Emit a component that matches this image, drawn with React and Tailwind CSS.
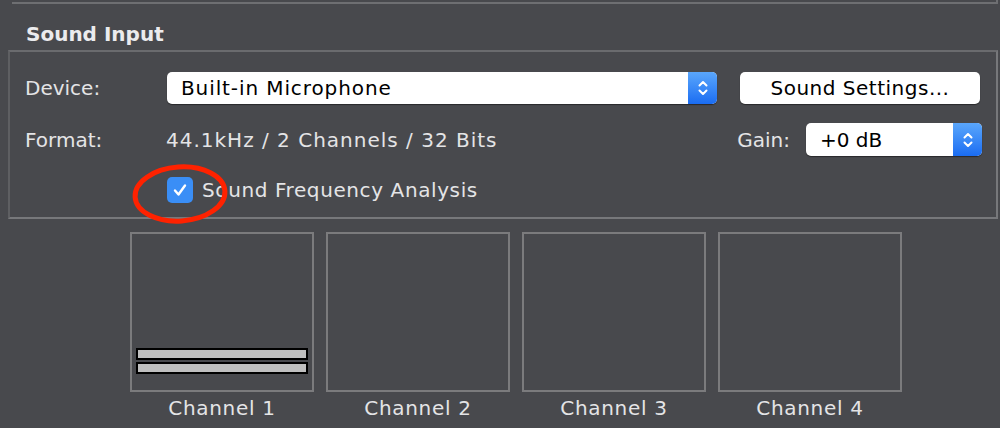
import React from "react";

const font = { fontFamily: '"DejaVu Sans", "Liberation Sans", sans-serif' };

function Stepper() {
  return (
    <div className="flex h-full w-[29px] items-center justify-center rounded-r-[5px] bg-gradient-to-b from-[#5aa6fb] to-[#1a6cf2]">
      <svg width="12" height="18" viewBox="0 0 12 18" fill="none" stroke="white" strokeWidth="2" strokeLinecap="round" strokeLinejoin="round">
        <path d="M2.5 6.5 L6 3 L9.5 6.5" />
        <path d="M2.5 11.5 L6 15 L9.5 11.5" />
      </svg>
    </div>
  );
}

function Popup({ text, className, textClass }) {
  return (
    <div className={"flex h-[32px] items-stretch rounded-[5px] bg-white shadow-[0_1px_1px_rgba(0,0,0,0.45)] " + className}>
      <div className={"flex flex-1 items-center pl-[14px] text-[20px] text-black " + (textClass || "")}>{text}</div>
      <Stepper />
    </div>
  );
}

function Channel({ label, bars }) {
  return (
    <div className="flex w-[184px] flex-col items-center">
      <div className="flex h-[160px] w-[184px] flex-col justify-end border-2 border-[#7b7b7d] px-[4px] pb-[16px]">
        {bars && (
          <div className="flex flex-col gap-[2px]">
            <div className="h-[12px] border-2 border-black bg-[#bfbfbf]" />
            <div className="h-[12px] border-2 border-black bg-[#bfbfbf]" />
          </div>
        )}
      </div>
      <div className="mt-[4px] text-[20px] leading-[24px] tracking-[0.7px] text-[#e4e4e6]">{label}</div>
    </div>
  );
}

export default function App() {
  return (
    <div className="relative h-[428px] w-[1000px] overflow-hidden bg-[#48494d]" style={font}>
      <div className="ml-[12px] h-[4px] w-[986px] border-b-2 border-r-2 border-[#6e6f72]" />
      <div className="pl-[26px] pt-[18px] text-[20px] font-bold leading-[24px] text-[#ebebed]">Sound Input</div>
      <div className="ml-[8px] mt-[4px] h-[169px] w-[990px] border-2 border-b-[#77787b] border-l-[#5e5f62] border-r-[#77787b] border-t-[#6a6b6e] pl-[15px] pr-[14px] pt-[20px] text-[20px] text-[#e4e4e6]">
        <div className="flex items-center">
          <div className="w-[142px]">Device:</div>
          <Popup text="Built-in Microphone" className="w-[550px]" textClass="tracking-[0.9px]" />
          <div className="ml-[23px] flex h-[32px] w-[240px] items-center justify-center rounded-[5px] bg-white tracking-[0.5px] text-black shadow-[0_1px_1px_rgba(0,0,0,0.45)]">
            Sound Settings...
          </div>
        </div>
        <div className="mt-[19px] flex items-center">
          <div className="w-[141px]">Format:</div>
          <div className="flex-1 tracking-[1px]">44.1kHz / 2 Channels / 32 Bits</div>
          <div className="mr-[16px]">Gain:</div>
          <Popup text="+0 dB" className="h-[33px] w-[176px]" />
        </div>
        <div className="mt-[19px] flex items-center pl-[142px]">
          <div className="flex h-[26px] w-[26px] items-center justify-center rounded-[5px] bg-[#3a8ef6]">
            <svg width="16" height="16" viewBox="0 0 16 16" fill="none" stroke="white" strokeWidth="2.4" strokeLinecap="round" strokeLinejoin="round">
              <path d="M3 8.5 L6.5 12.5 L13 3.5" />
            </svg>
          </div>
          <div className="ml-[9px] tracking-[0.6px]">Sound Frequency Analysis</div>
        </div>
      </div>
      <div className="ml-[130px] mt-[13px] flex gap-[12px]">
        <Channel label="Channel 1" bars />
        <Channel label="Channel 2" />
        <Channel label="Channel 3" />
        <Channel label="Channel 4" />
      </div>
      <svg className="absolute left-[130px] top-[163px]" width="100" height="64" viewBox="0 0 100 64" fill="none">
        <ellipse cx="50" cy="31" rx="45" ry="27" stroke="#ff2200" strokeWidth="5" transform="rotate(-4 50 31)" />
      </svg>
    </div>
  );
}
